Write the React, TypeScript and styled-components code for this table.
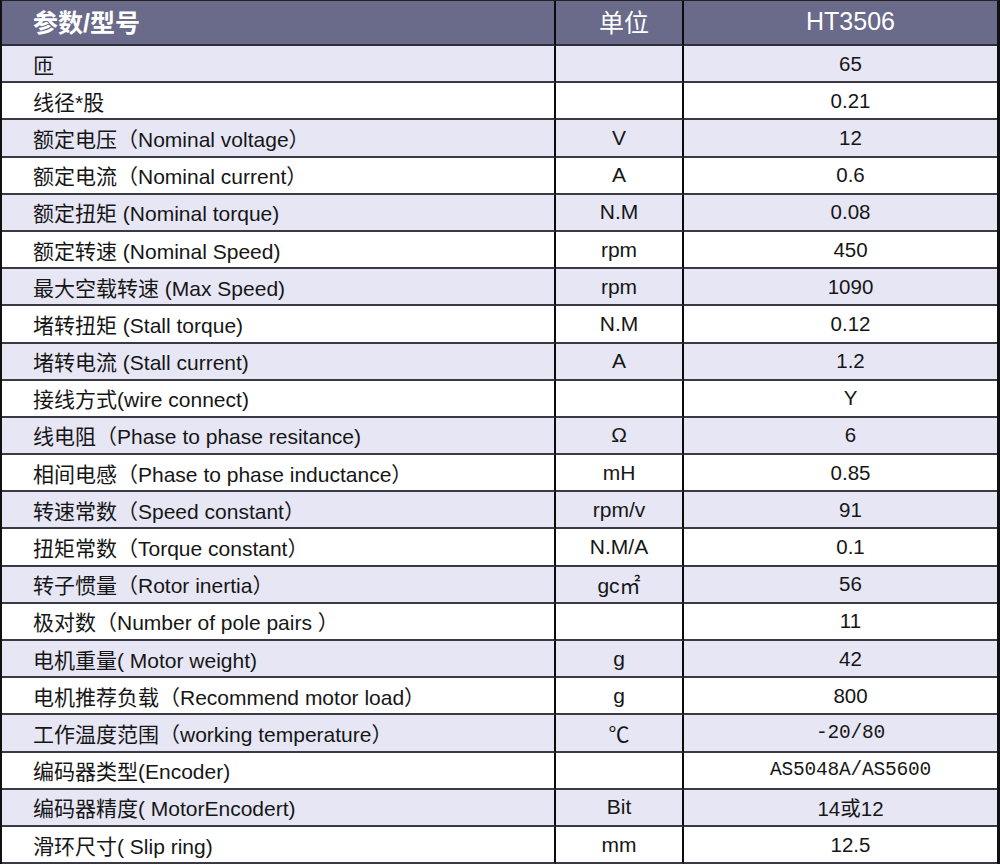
import React from "react";
import styled, { createGlobalStyle } from "styled-components";

const GlobalStyle = createGlobalStyle`
  html, body { margin: 0; padding: 0; background: #ffffff; }
  body { font-family: "Liberation Sans", "Noto Sans CJK SC", sans-serif; }
`;

const Table = styled.div`
  width: 1000px;
  box-sizing: border-box;
  display: grid;
  grid-template-columns: 554px 128px 1fr;
  grid-template-rows: 45px repeat(22, 37.2px);
  border-left: 2px solid #111;
  border-right: 3px solid #111;
  border-top: 1px solid #222;
`;

type Col = 0 | 1 | 2;

const HeadCell = styled.div<{ $col: Col }>`
  box-sizing: border-box;
  background: #6a6a8b;
  color: #ffffff;
  font-size: 25px;
  font-weight: ${(p) => (p.$col === 0 ? 700 : 400)};
  display: flex;
  align-items: center;
  justify-content: ${(p) => (p.$col === 0 ? "flex-start" : "center")};
  padding: ${(p) => (p.$col === 0 ? "0 0 3px 31px" : p.$col === 1 ? "0 0 3px 10px" : "0 0 3px 20px")};
  border-right: ${(p) => (p.$col === 2 ? "none" : "2px solid #0a0a0a")};
  border-bottom: 2px solid #2e2e3a;
`;

const Cell = styled.div<{ $col: Col; $shade: boolean; $mono?: boolean }>`
  box-sizing: border-box;
  background: ${(p) => (p.$shade ? "#e6e6f5" : "#ffffff")};
  color: #161616;
  font-size: ${(p) => (p.$mono ? "19.5px" : p.$col === 2 ? "20.5px" : "21px")};
  font-family: ${(p) =>
    p.$mono
      ? `"Liberation Mono", "Noto Sans CJK SC", monospace`
      : `"Liberation Sans", "Noto Sans CJK SC", sans-serif`};
  display: flex;
  align-items: center;
  justify-content: ${(p) => (p.$col === 0 ? "flex-start" : "center")};
  padding: ${(p) => (p.$col === 0 ? "0 0 0 31px" : p.$col === 1 ? "0" : "0 0 0 20px")};
  border-right: ${(p) => (p.$col === 2 ? "none" : "2px solid #0a0a0a")};
  border-bottom: 2px solid #3a3a44;
  white-space: nowrap;
  letter-spacing: ${(p) => (p.$mono ? "-0.2px" : "0")};
`;

type Row = { name: string; unit: string; value: string; mono?: boolean };

const rows: Row[] = [
  { name: "匝", unit: "", value: "65" },
  { name: "线径*股", unit: "", value: "0.21" },
  { name: "额定电压（Nominal voltage）", unit: "V", value: "12" },
  { name: "额定电流（Nominal current）", unit: "A", value: "0.6" },
  { name: "额定扭矩 (Nominal torque)", unit: "N.M", value: "0.08" },
  { name: "额定转速 (Nominal Speed)", unit: "rpm", value: "450" },
  { name: "最大空载转速 (Max Speed)", unit: "rpm", value: "1090" },
  { name: "堵转扭矩 (Stall torque)", unit: "N.M", value: "0.12" },
  { name: "堵转电流 (Stall current)", unit: "A", value: "1.2" },
  { name: "接线方式(wire connect)", unit: "", value: "Y" },
  { name: "线电阻（Phase to phase resitance)", unit: "Ω", value: "6" },
  { name: "相间电感（Phase to phase inductance）", unit: "mH", value: "0.85" },
  { name: "转速常数（Speed constant）", unit: "rpm/v", value: "91" },
  { name: "扭矩常数（Torque constant）", unit: "N.M/A", value: "0.1" },
  { name: "转子惯量（Rotor inertia）", unit: "gc㎡", value: "56" },
  { name: "极对数（Number of pole pairs ）", unit: "", value: "11" },
  { name: "电机重量( Motor weight)", unit: "g", value: "42" },
  { name: "电机推荐负载（Recommend motor load）", unit: "g", value: "800" },
  { name: "工作温度范围（working temperature）", unit: "℃", value: "-20/80", mono: true },
  { name: "编码器类型(Encoder)", unit: "", value: "AS5048A/AS5600", mono: true },
  { name: "编码器精度( MotorEncodert)", unit: "Bit", value: "14或12" },
  { name: "滑环尺寸( Slip ring)", unit: "mm", value: "12.5" },
];

export default function App() {
  return (
    <>
      <GlobalStyle />
      <Table>
        <HeadCell $col={0}>参数/型号</HeadCell>
        <HeadCell $col={1}>单位</HeadCell>
        <HeadCell $col={2}>HT3506</HeadCell>
        {rows.map((r, i) => {
          const shade = i % 2 === 0;
          return (
            <React.Fragment key={i}>
              <Cell $col={0} $shade={shade}>
                {r.name}
              </Cell>
              <Cell $col={1} $shade={shade}>
                {r.unit}
              </Cell>
              <Cell $col={2} $shade={shade} $mono={r.mono}>
                {r.value}
              </Cell>
            </React.Fragment>
          );
        })}
      </Table>
    </>
  );
}
